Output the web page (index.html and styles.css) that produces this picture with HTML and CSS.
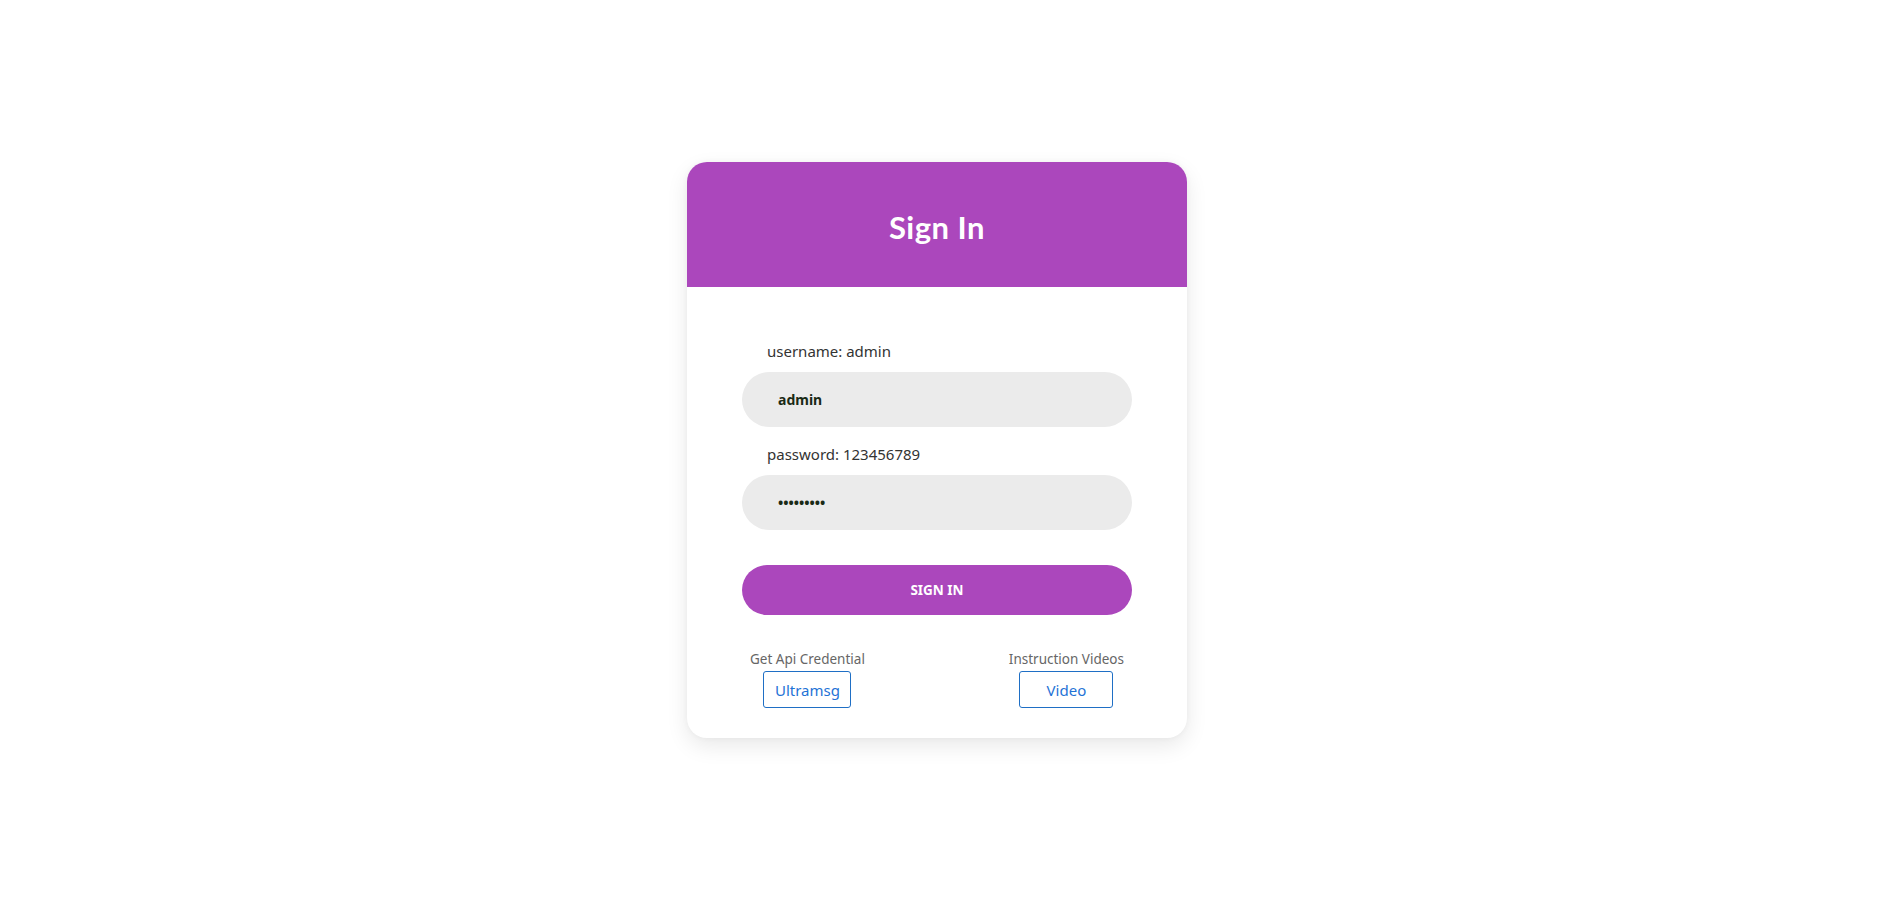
FILE: index.html
```html
<!DOCTYPE html>
<html lang="en">
<head>
<meta charset="utf-8" />
<title>Sign In</title>
<link rel="stylesheet" href="styles.css">
</head>
<body>
<div class="page">
  <div class="card">
    <div class="card-head">Sign In</div>
    <form class="card-body" action="#" method="post">
      <label class="label" for="username">username: admin</label>
      <input class="field" id="username" name="username" type="text" value="admin" />
      <label class="label" for="password">password: 123456789</label>
      <input class="field" id="password" name="password" type="password" value="123456789" />
      <button class="btn" type="submit">SIGN IN</button>
      <div class="links">
        <div class="link-col">
          <span class="link-title">Get Api Credential</span>
          <a class="link-btn" href="#">Ultramsg</a>
        </div>
        <div class="link-col">
          <span class="link-title">Instruction Videos</span>
          <a class="link-btn link-wide" href="#">Video</a>
        </div>
      </div>
    </form>
  </div>
</div>
</body>
</html>
```

FILE: styles.css
```css
*{box-sizing:border-box;}
html,body{margin:0;height:100%;}
body{font-family:"Noto Sans","Open Sans",sans-serif;color:#333333;background:#ffffff;}
.page{min-height:100%;display:flex;align-items:center;justify-content:center;padding:3px 8px 0 0;}
.card{width:500px;background:#ffffff;border-radius:20px;overflow:hidden;box-shadow:0 8px 22px rgba(0,0,0,0.09),0 0 6px rgba(0,0,0,0.04);}
.card-head{height:125px;background:#AB47BC;color:#ffffff;display:flex;align-items:center;justify-content:center;font-family:"Lato",sans-serif;font-weight:700;font-size:31px;letter-spacing:0.5px;padding-top:5px;}
.card-body{display:flex;flex-direction:column;padding:54px 55px 30px 55px;margin:0;}
.label{font-size:15px;color:#333333;padding-left:25px;line-height:20px;margin-bottom:11px;}
.field{height:55px;border:none;border-radius:28px;background:#EBEBEB;padding:0 36px;font-family:"Noto Sans",sans-serif;font-size:14px;font-weight:700;color:#1a2a16;outline:none;margin-bottom:17px;}
.field[type=password]{margin-bottom:35px;}
.btn{height:50px;border:none;border-radius:25px;background:#AB47BC;color:#ffffff;font-family:"Noto Sans",sans-serif;font-weight:700;font-size:13.5px;cursor:pointer;}
.links{display:flex;justify-content:space-between;padding:0 8px;margin-top:35px;}
.link-col{display:flex;flex-direction:column;align-items:center;}
.link-title{font-size:13.5px;color:#666666;line-height:18px;margin-bottom:3px;}
.link-btn{display:flex;align-items:center;justify-content:center;height:37px;width:88px;border:1px solid #1F6FC5;border-radius:3px;color:#1F73D6;text-decoration:none;font-size:15px;}
.link-wide{width:94px;}
```
